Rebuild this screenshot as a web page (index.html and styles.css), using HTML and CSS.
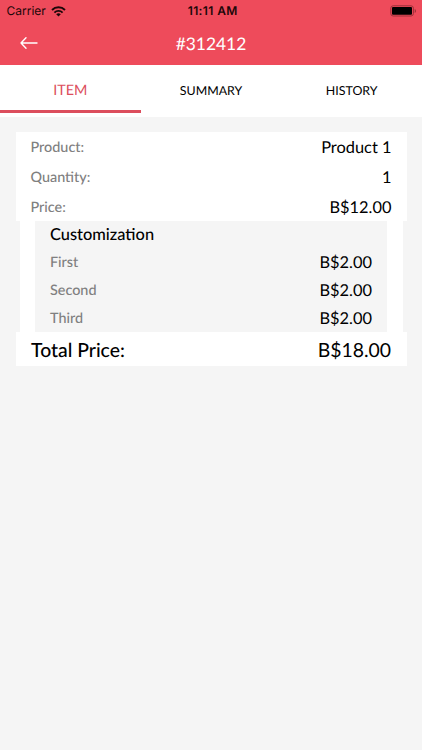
FILE: index.html
```html
<!DOCTYPE html>
<html lang="en">
<head>
<meta charset="utf-8">
<title>Order #312412</title>
<link rel="stylesheet" href="styles.css">
</head>
<body>
<header class="header">
  <div class="status">
    <span class="carrier">Carrier
      <svg class="wifi" width="15" height="11" viewBox="0 0 15 11" fill="none" stroke="#1d0709" stroke-width="1.9"><path d="M1 4a9.2 9.2 0 0 1 13 0M3.4 6.6a5.8 5.8 0 0 1 8.2 0"/><path d="M7.5 10.6 5.2 8.3a3.25 3.25 0 0 1 4.6 0z" fill="#1d0709" stroke="none"/></svg>
    </span>
    <span class="time">11:11 AM</span>
    <svg class="battery" width="27" height="12" viewBox="0 0 27 12"><rect x=".8" y=".8" width="22.6" height="10.2" rx="2.4" fill="none" stroke="#9b3039"/><rect x="2" y="2" width="20" height="7.8" rx="1" fill="#000"/><path d="M24.7 4v4c1.8-.6 1.8-3.4 0-4z" fill="#9b3039"/></svg>
  </div>
  <div class="navbar">
    <svg class="back" width="18" height="14" viewBox="0 0 18 14" fill="none" stroke="#fff" stroke-width="1.4" stroke-linecap="round" stroke-linejoin="round"><path d="M17 7H1M6 1.8 1 7l5 5.2"/></svg>
    <h1 class="title">#312412</h1>
  </div>
</header>
<nav class="tabs">
  <span class="tab active">ITEM</span>
  <span class="tab">SUMMARY</span>
  <span class="tab">HISTORY</span>
</nav>
<main class="content">
  <section class="card">
    <div class="row"><span class="label">Product:</span><span>Product 1</span></div>
    <div class="row"><span class="label">Quantity:</span><span>1</span></div>
    <div class="row"><span class="label">Price:</span><span>B$12.00</span></div>
  </section>
  <section class="custom">
    <div class="options">
      <h2 class="heading">Customization</h2>
      <div class="option"><span class="label">First</span><span>B$2.00</span></div>
      <div class="option"><span class="label">Second</span><span>B$2.00</span></div>
      <div class="option"><span class="label">Third</span><span>B$2.00</span></div>
    </div>
  </section>
  <section class="total"><span class="total-label">Total Price:</span><span>B$18.00</span></section>
</main>
</body>
</html>
```
FILE: styles.css
```css
* { box-sizing: border-box; }
body {
  margin: 0;
  min-height: 750px;
  background: #f5f5f5;
  color: #000;
  font-family: Lato, "Liberation Sans", sans-serif;
  font-size: 16.4px;
  text-rendering: geometricPrecision;
}
.header { height: 65.4px; background: #ee4b5b; }
.status {
  display: grid;
  grid-template-columns: 1fr auto 1fr;
  align-items: center;
  height: 22px;
  padding: 0 5px 0 6.5px;
  color: #1d0709;
  font: 12px/22px Inter, sans-serif;
}
.carrier { display: flex; align-items: center; gap: 5px; }
.time { padding-left: 2px; font-weight: 600; letter-spacing: 0.4px; }
.battery { justify-self: end; }
.navbar {
  display: grid;
  grid-template-columns: 1fr auto 1fr;
  align-items: center;
  height: 42px;
  padding: 0 20px;
}
.title { margin: 0; color: #fff; font-size: 17.4px; font-weight: 400; }
.tabs { display: grid; grid-template-columns: repeat(3, 1fr); height: 51.2px; background: #fff; }
.tab {
  height: 48px;
  padding-top: 1px;
  border-bottom: 3px solid transparent;
  text-align: center;
  font-size: 12.4px;
  line-height: 50px;
}
.active { border-color: #dc4e5d; color: #dc4e5d; font-size: 14.4px; }
.content { padding: 15px 15.5px; }
.card { background: #fff; padding: 0 15px; }
.row, .option, .total { display: flex; align-items: center; justify-content: space-between; }
.row { height: 29.9px; padding-top: 1.6px; }
.label { color: #808080; font-size: 14.4px; font-weight: 500; }
.custom { margin: 0 4px; padding: 0 15.5px; background: #fff; }
.options { padding: 0 15px; background: #f5f5f5; }
.heading { margin: 0; font-size: 16.4px; line-height: 27.2px; font-weight: 500; }
.option { height: 28px; padding-top: 0.5px; }
.total { height: 33.5px; padding: 2px 15.5px 0; background: #fff; font-size: 19.4px; }
.total-label { font-weight: 500; }
```
